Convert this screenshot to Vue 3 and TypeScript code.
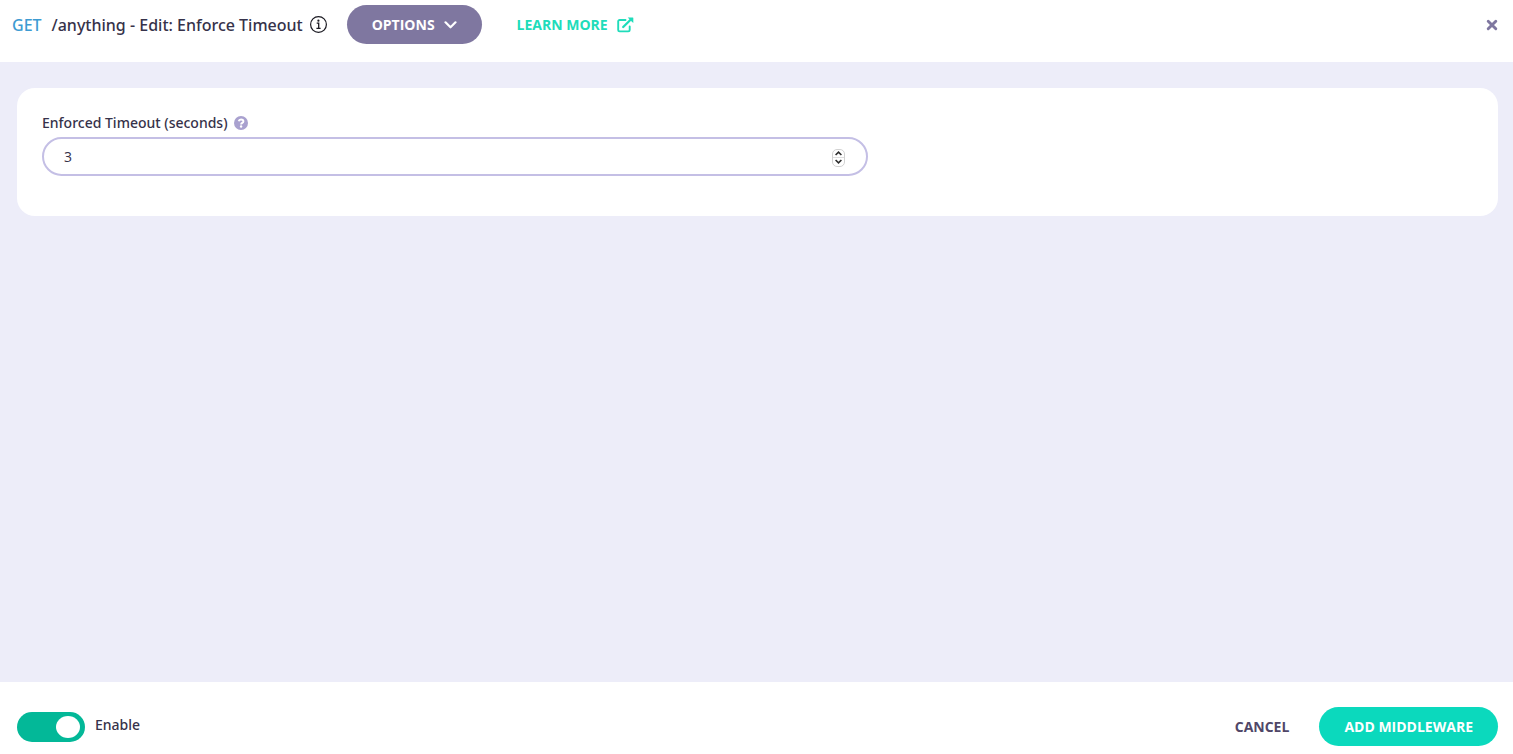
<script setup lang="ts">
import { ref } from 'vue'

const timeout = ref<number>(3)
const enabled = ref<boolean>(true)

function step(delta: number): void {
  timeout.value = Math.max(0, Number(timeout.value) + delta)
}
</script>

<template>
  <div class="editor">
    <header class="header">
      <h1 class="title">
        <span class="method">GET</span>
        <span>/anything - Edit: Enforce Timeout</span>
      </h1>
      <button class="info" type="button" aria-label="Information">
        <svg width="17" height="17" viewBox="0 0 17 17" fill="none" aria-hidden="true">
          <circle cx="8.5" cy="8.5" r="7.9" stroke="#1b1a22" stroke-width="1.2" />
          <circle cx="8.4" cy="4.7" r="1.1" fill="#1b1a22" />
          <path d="M6.7 7.2h2v5M6.4 12.4h4.2" stroke="#1b1a22" stroke-width="1.3" />
        </svg>
      </button>
      <button class="btn options" type="button">
        OPTIONS
        <svg width="13" height="8" viewBox="0 0 13 8" fill="none" aria-hidden="true">
          <path d="M1.5 1.3l5 5 5-5" stroke="#fff" stroke-width="2.2" stroke-linecap="round" stroke-linejoin="round" />
        </svg>
      </button>
      <a class="learn" href="#learn-more">
        LEARN MORE
        <svg width="17" height="16" viewBox="0 0 17 16" fill="none" aria-hidden="true">
          <path d="M8.500 3H2.600C1.800 3 1.200 3.500 1.200 4.300V13c0 .8.6 1.400 1.400 1.400h8.700c.8 0 1.400-.6 1.400-1.400V9.500" stroke="#20dcba" stroke-width="1.900" stroke-linecap="round" />
          <path d="M6.200 10L13.600 2.800" stroke="#20dcba" stroke-width="2.300" stroke-linecap="round" />
          <path d="M10.800.5h5c.3 0 .5.2.5.5v5L14.600 4.600 12.400 2.300z" fill="#20dcba" />
        </svg>
      </a>
      <button class="close" type="button" aria-label="Close">
        <svg width="12" height="12" viewBox="0 0 12 12" fill="none" aria-hidden="true">
          <path d="M2.200 2.200l7.600 7.600M9.800 2.200l-7.600 7.600" stroke="#7f77a0" stroke-width="2.900" stroke-linecap="round" />
        </svg>
      </button>
    </header>

    <main class="body">
      <section class="card">
        <div class="field">
          <div class="label-row">
            <label for="timeout">Enforced Timeout (seconds)</label>
            <svg width="14" height="14" viewBox="0 0 14 14" fill="none" role="img" aria-label="Help">
              <circle cx="7" cy="7" r="7" fill="#a9a1cf" />
              <path d="M4.700 5.300C5 4 5.900 3.500 7 3.500c1.400 0 2.400.8 2.400 1.900C9.400 6.900 7.100 6.900 7.100 8.400" stroke="#fff" stroke-width="1.900" />
              <circle cx="7.100" cy="10.500" r="1.200" fill="#fff" />
            </svg>
          </div>
          <div class="control">
            <input id="timeout" v-model="timeout" type="number" min="0" />
            <div class="stepper">
              <button type="button" aria-label="Increase" @click="step(1)">
                <svg width="7" height="5" viewBox="0 0 7 5" fill="none" aria-hidden="true">
                  <path d="M.6 4l2.900-2.800L6.400 4" stroke="#2d2d2d" stroke-width="1.600" />
                </svg>
              </button>
              <button type="button" aria-label="Decrease" @click="step(-1)">
                <svg width="7" height="5" viewBox="0 0 7 5" fill="none" aria-hidden="true">
                  <path d="M.6 1l2.900 2.800L6.400 1" stroke="#2d2d2d" stroke-width="1.600" />
                </svg>
              </button>
            </div>
          </div>
        </div>
      </section>
    </main>

    <footer class="footer">
      <input id="enable" v-model="enabled" class="toggle" type="checkbox" role="switch" />
      <label class="enable" for="enable">Enable</label>
      <div class="actions">
        <button class="btn cancel" type="button">CANCEL</button>
        <button class="btn add" type="button">ADD MIDDLEWARE</button>
      </div>
    </footer>
  </div>
</template>

<style>
body {
  margin: 0;
}
</style>

<style scoped>
.editor {
  display: flex;
  flex-direction: column;
  min-height: 100vh;
  background: #ededf9;
  color: #36324a;
  font-family: "Open Sans", sans-serif;
  font-size: 14px;
  line-height: 20px;
}

.editor *,
.editor {
  box-sizing: border-box;
}

button,
input {
  font: inherit;
  color: inherit;
}

button {
  display: flex;
  align-items: center;
  justify-content: center;
  padding: 0;
  border: 0;
  background: none;
  cursor: pointer;
}

.header {
  display: flex;
  align-items: center;
  padding: 5px 15px 18px 12px;
  background: #fff;
}

.title,
.label-row,
.enable {
  font-family: "Noto Sans", "Open Sans", sans-serif;
  font-weight: 500;
}

.title {
  display: flex;
  gap: 10px;
  margin: 0;
  font-size: 16px;
}

.method {
  color: #3d9bd2;
}

.info {
  margin: 0 20px 0 7px;
}

.btn {
  height: 39px;
  border-radius: 20px;
  font-weight: 700;
}

.options {
  gap: 9px;
  padding: 0 25px;
  background: #7f77a0;
  color: #fff;
}

.learn {
  display: flex;
  align-items: center;
  gap: 9px;
  margin-left: 35px;
  color: #20dcba;
  font-weight: 700;
  text-decoration: none;
}

.close {
  margin-left: auto;
}

.body {
  flex: 1;
  padding: 26px 15px 26px 17px;
}

.card {
  display: grid;
  grid-template-columns: repeat(12, 1fr);
  column-gap: 20px;
  padding: 25px 25px 40px;
  border-radius: 18px;
  background: #fff;
}

.field {
  grid-column: span 7;
}

.label-row {
  display: flex;
  align-items: center;
  gap: 6px;
  margin-bottom: 4px;
}

.control {
  display: flex;
  align-items: center;
  height: 39px;
  padding: 0 21px 0 20px;
  border: 2px solid #c4bfe5;
  border-radius: 20px;
}

.control input {
  flex: 1;
  min-width: 0;
  padding: 0;
  border: 0;
  outline: 0;
  background: none;
  appearance: textfield;
}

.control input::-webkit-inner-spin-button {
  display: none;
}

.stepper {
  display: flex;
  flex-direction: column;
  width: 13px;
  height: 18px;
  margin-top: 2px;
  border: 1px solid #d2d2d2;
  border-radius: 5px;
}

.stepper button {
  flex: 1;
}

.stepper button + button {
  border-top: 1px solid #dedede;
}

.footer {
  display: flex;
  align-items: center;
  padding: 25px 15px 8px 17px;
  background: #fff;
}

.toggle {
  display: flex;
  align-items: center;
  width: 68px;
  height: 30px;
  margin: 0;
  padding: 0 5px;
  border-radius: 15px;
  background: #b7b3c9;
  appearance: none;
  cursor: pointer;
}

.toggle::before {
  width: 24px;
  height: 22px;
  border-radius: 50%;
  background: #fff;
  content: "";
}

.toggle:checked {
  justify-content: flex-end;
  background: #03b898;
}

.enable {
  margin-left: 10px;
  padding-bottom: 4px;
}

.actions {
  display: flex;
  gap: 5px;
  margin-left: auto;
}

.cancel {
  padding: 0 25px;
  color: #504768;
}

.add {
  padding: 0 25px;
  background: #0bd9bd;
  color: #fff;
}
</style>
